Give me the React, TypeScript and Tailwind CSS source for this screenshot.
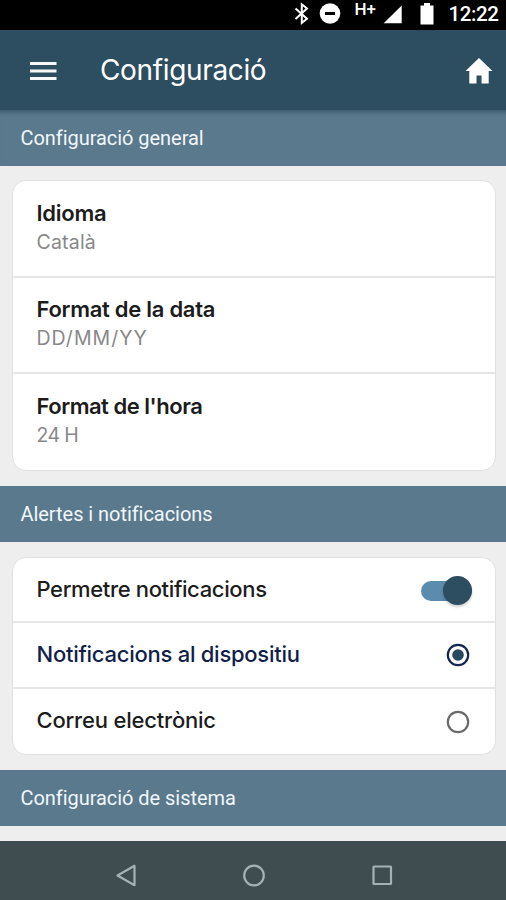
import clsx from "clsx";
import { useState } from "react";

const preferences = [
  { title: "Idioma", value: "Català", titleSpacing: "tracking-[-0.250px]", valueSpacing: "tracking-[0.2px]" },
  { title: "Format de la data", value: "DD/MM/YY", titleSpacing: "tracking-[-0.280px]", valueSpacing: "tracking-[1px]" },
  { title: "Format de l'hora", value: "24 H", titleSpacing: "tracking-[-0.480px]", valueSpacing: "tracking-[-0.6px]" },
];

function StatusBar() {
  return (
    <div className="flex h-[30px] shrink-0 bg-black">
      <svg className="h-[30px] w-full" viewBox="0 0 506 30" fill="#fff">
        <path d="M295.500 8.500 307 18.700l-5.200 4.300V4.300l5.200 4.200-11.500 10.500" fill="none" stroke="#fff" strokeWidth="2" />
        <circle cx="330" cy="13.500" r="10.300" />
        <path d="M325 12h10v3h-10z" fill="#000" />
        <text x="354.500" y="15.200" fontFamily="Roboto" fontSize="17" fontWeight="500">
          H+
        </text>
        <path d="M401.700 5.500v17.800h-18z" />
        <path d="M420.500 5.500h3.500V3h6v2.500h3.500v19h-13z" />
        <text x="448.500" y="21.300" fontFamily="Roboto" fontSize="20.500" fontWeight="500" textLength="50.500">
          12:22
        </text>
      </svg>
    </div>
  );
}

function Header() {
  return (
    <header className="flex h-20 shrink-0 items-center bg-[#2d4d61] pr-[13px] pl-[30px] text-white">
      <button className="pt-px" aria-label="Menú">
        <svg width="27" height="20" viewBox="0 0 27 20" fill="none" stroke="#f5f9fb" strokeWidth="3">
          <path d="M0 2.500h26.500M0 10h26.500M0 17.500h26.500" />
        </svg>
      </button>
      <h1 className="ml-[43px] text-[28px] leading-none tracking-[-0.350px]">Configuració</h1>
      <button className="ml-auto pt-px" aria-label="Inici">
        <svg width="28" height="26" viewBox="0 0 28 26" fill="#fff">
          <path d="M14 0 .500 13h3.800v12.500h7.200v-8h5v8h7.200V13h3.800z" />
        </svg>
      </button>
    </header>
  );
}

function SectionTitle({ children, className }: { children: string; className?: string }) {
  return (
    <h2
      className={clsx(
        "flex h-14 shrink-0 items-center bg-[#5b798d] pl-[20.500px] font-['Roboto',sans-serif] text-[20px] tracking-[-0.050px] text-[#f0f7fc]",
        className,
      )}
    >
      {children}
    </h2>
  );
}

function Radio({ checked }: { checked: boolean }) {
  return (
    <svg className="mr-[2px]" width="24" height="24" viewBox="0 0 24 24" fill="none">
      <circle cx="12" cy="12" r="10.200" stroke={checked ? "#14284f" : "#6b6b6b"} strokeWidth="2.200" />
      {checked && <circle cx="12" cy="12" r="5.800" fill="#28485e" />}
    </svg>
  );
}

export default function App() {
  const [enabled, setEnabled] = useState(true);
  const [channel, setChannel] = useState("device");

  return (
    <main className="flex h-[900px] w-[506px] flex-col overflow-hidden bg-[#eeeeee] font-['Inter',sans-serif] text-[#1c1c1c]">
      <StatusBar />
      <Header />
      <SectionTitle className="shadow-[inset_0_6px_4px_-4px_#38576a]">Configuració general</SectionTitle>

      <section className="mt-[14px] mr-2.5 mb-[15px] ml-3 h-[291px] shrink-0 divide-y-2 divide-[#e6e6e6] overflow-hidden rounded-[14px] border border-[#e0e0e0] bg-white">
        {preferences.map((item) => (
          <div key={item.title} className="h-[96.500px] px-[23.500px] pt-[17.500px]">
            <h3 className={clsx("text-[22px] leading-7 font-semibold", item.titleSpacing)}>{item.title}</h3>
            <p className={clsx("mt-px text-[19.500px] leading-7 text-[#888888]", item.valueSpacing)}>{item.value}</p>
          </div>
        ))}
      </section>

      <SectionTitle>Alertes i notificacions</SectionTitle>

      <section className="mt-[15px] mr-2.5 mb-[15px] ml-3 h-[198px] shrink-0 divide-y-2 divide-[#e6e6e6] overflow-hidden rounded-[14px] border border-[#e0e0e0] bg-white text-[22px] font-medium">
        <button
          className="flex h-[65px] w-full items-center justify-between pr-[23px] pl-[23.500px] tracking-[-0.360px]"
          role="switch"
          aria-checked={enabled}
          onClick={() => setEnabled(!enabled)}
        >
          Permetre notificacions
          <span
            className={clsx(
              "mt-0.5 flex h-5 w-[51px] items-center rounded-full",
              enabled ? "justify-end bg-[#5b8cae]" : "bg-[#b5b5b5]",
            )}
          >
            <span className="size-[29px] shrink-0 rounded-full bg-[#2d4d61] shadow-[0_2px_3px_#0003]" />
          </span>
        </button>
        <button
          className={clsx(
            "flex h-[66px] w-full items-center justify-between pr-[23px] pb-px pl-[23.500px] tracking-[-0.260px]",
            channel === "device" && "text-[#111f4a]",
          )}
          onClick={() => setChannel("device")}
        >
          Notificacions al dispositiu
          <Radio checked={channel === "device"} />
        </button>
        <button
          className={clsx(
            "flex h-[66px] w-full items-center justify-between pr-[23px] pb-px pl-[23.500px] tracking-[-0.200px]",
            channel === "mail" && "text-[#111f4a]",
          )}
          onClick={() => setChannel("mail")}
        >
          <span className="pb-0.5">Correu electrònic</span>
          <Radio checked={channel === "mail"} />
        </button>
      </section>

      <SectionTitle>Configuració de sistema</SectionTitle>

      <nav className="mt-auto flex h-[59px] shrink-0 bg-[#404d50]">
        <svg className="h-[59px] w-full" viewBox="0 0 506 59" fill="none" stroke="#a5b1b3" strokeWidth="2.200">
          <path d="M134.500 24.800v19.400L117.500 34.500z" strokeLinejoin="round" />
          <circle cx="254" cy="34.500" r="9.800" />
          <rect x="373.500" y="25.500" width="17.500" height="17.500" rx="0.500" />
        </svg>
      </nav>
    </main>
  );
}
